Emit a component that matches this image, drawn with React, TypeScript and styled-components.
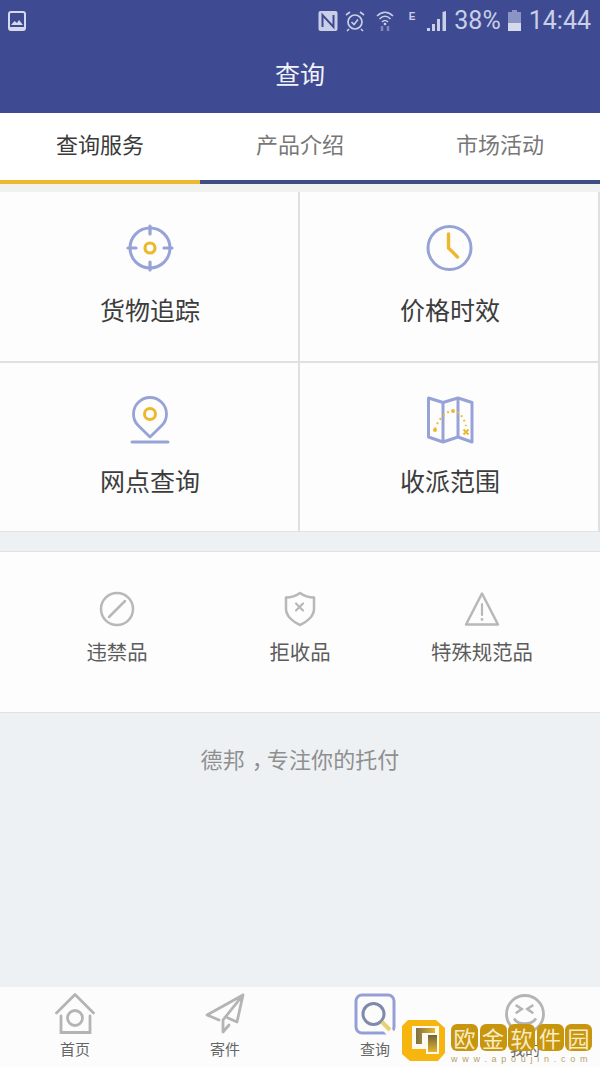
import React from "react";
import styled, { createGlobalStyle } from "styled-components";

const FONT = `"Noto Sans CJK SC", "Noto Sans", sans-serif`;
const BLUE = "#97a3d6";
const GOLD = "#ecb92e";
const GREY = "#b8b8b8";
const NAVGREY = "#b4b4b4";

const Global = createGlobalStyle`
  html, body { margin: 0; padding: 0; background: #eef1f4; }
  * { box-sizing: border-box; }
  #root { width: 600px; height: 1067px; overflow: hidden; }
`;

const Page = styled.div`
  position: relative;
  width: 600px;
  height: 1067px;
  display: flex;
  flex-direction: column;
  background: #eef1f4;
  font-family: ${FONT};
  overflow: hidden;
`;
const Header = styled.header`
  height: 113px;
  flex: none;
  background: #3e4b92;
  display: flex;
  flex-direction: column;
`;
const StatusBar = styled.div`
  height: 41px;
  padding: 0 9px 0 8px;
  display: flex;
  align-items: center;
  color: #c9cfe6;
`;
const StatusRight = styled.div`
  margin-left: auto;
  display: flex;
  align-items: center;
  height: 100%;
`;
const StatusText = styled.span<{ $ml: number }>`
  font-family: "Roboto", sans-serif;
  font-size: 25px;
  line-height: 1;
  margin-left: ${(p) => p.$ml}px;
  color: #c9cfe6;
`;
const Title = styled.h1`
  margin: 0;
  flex: 1;
  padding-bottom: 8px;
  display: flex;
  align-items: center;
  justify-content: center;
  color: #f1f2f8;
  font-size: 25px;
  font-weight: 400;
`;
const Tabs = styled.nav`
  height: 71px;
  flex: none;
  display: grid;
  grid-template-columns: repeat(3, 1fr);
  background: #fff;
`;
const Tab = styled.div<{ $active?: boolean }>`
  display: flex;
  align-items: center;
  justify-content: center;
  padding-bottom: 8px;
  font-size: 22px;
  color: ${(p) => (p.$active ? "#3a3a3a" : "#777")};
  border-bottom: 4px solid ${(p) => (p.$active ? GOLD : "#3e4e82")};
`;
const ServiceGrid = styled.section`
  height: 348px;
  flex: none;
  display: grid;
  grid-template-columns: 300px 300px;
  grid-template-rows: 171px 168px;
  background: #fdfdfd;
  border-top: 8px solid #f1f1f0;
  border-bottom: 1px solid #dfe2e4;
`;
const ServiceCell = styled.div<{ $top?: boolean }>`
  display: flex;
  flex-direction: column;
  align-items: center;
  padding: ${(p) => (p.$top ? 32 : 33)}px 0 0 2px;
  border-right: 2px solid #dfe0e1;
  border-bottom: ${(p) => (p.$top ? "2px solid #dfe0e1" : "none")};
`;
const ServiceLabel = styled.div<{ $top?: boolean }>`
  margin-top: ${(p) => (p.$top ? 19 : 18)}px;
  font-size: 25px;
  line-height: 36px;
  color: #3c3c3c;
`;
const RuleRow = styled.section`
  margin-top: 19px;
  height: 162px;
  flex: none;
  background: #fdfdfd;
  border-top: 1px solid #dfe1e3;
  border-bottom: 1px solid #dfe1e3;
  display: grid;
  grid-template-columns: 234px 132px 232px;
`;
const RuleCell = styled.div`
  display: flex;
  flex-direction: column;
  align-items: center;
  padding-top: 39px;
`;
const RuleLabel = styled.div`
  margin-top: 10px;
  font-size: 20.4px;
  line-height: 28px;
  color: #5c5c5c;
  white-space: nowrap;
`;
const Slogan = styled.div`
  flex: 1;
  padding-top: 29px;
  text-align: center;
  font-size: 22px;
  line-height: 32px;
  color: #8f8f8f;
  letter-spacing: 0.1px;
`;
const SloganComma = styled.span`
  display: inline-block;
  transform: translateX(7px);
`;
const BottomNav = styled.nav`
  height: 80px;
  flex: none;
  background: #fcfcfc;
  display: grid;
  grid-template-columns: 150px 150px 150px 150px;
`;
const NavItem = styled.div`
  display: flex;
  flex-direction: column;
  align-items: center;
  padding-top: 6px;
`;
const NavLabel = styled.div`
  font-size: 15px;
  line-height: 20px;
  margin-top: 4px;
  color: #666;
`;
const Watermark = styled.div`
  position: absolute;
  left: 402px;
  top: 1020px;
  width: 198px;
  height: 47px;
  display: flex;
  gap: 5px;
`;
const WmColumn = styled.div`
  display: flex;
  flex-direction: column;
  gap: 3px;
  padding-top: 4px;
`;
const WmChars = styled.div`
  display: flex;
  gap: 1.5px;
`;
const WmChar = styled.span`
  width: 27px;
  height: 27px;
  border-radius: 6px;
  background: #c8950f;
  color: #f8ecc4;
  font-size: 22px;
  line-height: 26px;
  text-align: center;
`;
const WmUrl = styled.div`
  font-family: "Liberation Sans", sans-serif;
  font-size: 9px;
  line-height: 10px;
  letter-spacing: 4.75px;
  color: #b8a26a;
  white-space: nowrap;
`;

const Ic = styled.svg`
  display: block;
  flex: none;
`;

const Target = () => (
  <Ic width="48" height="48" viewBox="0 0 48 48" fill="none">
    <circle cx="24" cy="24" r="20" stroke={BLUE} strokeWidth="3" />
    <path d="M24 2v8M24 38v8M2 24h8M38 24h8" stroke={BLUE} strokeWidth="3.2" strokeLinecap="round" />
    <circle cx="24" cy="24" r="5" stroke={GOLD} strokeWidth="3.2" />
  </Ic>
);
const Clock = () => (
  <Ic width="48" height="48" viewBox="0 0 48 48" fill="none">
    <circle cx="23.500" cy="24" r="21.500" stroke={BLUE} strokeWidth="3" />
    <path d="M22.500 10v14l9 9" stroke={GOLD} strokeWidth="3.400" strokeLinecap="round" strokeLinejoin="round" />
  </Ic>
);
const Pin = () => (
  <Ic width="40" height="48" viewBox="0 0 40 48" fill="none">
    <path d="M20 41 L8 29.300 A16.500 16.500 0 1 1 32 29.300 Z" stroke={BLUE} strokeWidth="2.800" strokeLinejoin="round" />
    <circle cx="20" cy="18" r="5.500" stroke={GOLD} strokeWidth="3" />
    <path d="M2 46h36" stroke={BLUE} strokeWidth="3" strokeLinecap="round" />
  </Ic>
);
const MapIcon = () => (
  <Ic width="48" height="48" viewBox="0 0 48 48" fill="none">
    <path d="M2.500 2 L17 6.500 L32 2 L46 6.500 V46 L32 41 L17 46 L2.500 41 Z" stroke={BLUE} strokeWidth="3" strokeLinejoin="round" />
    <path d="M17 6.500V46M32 2V41" stroke={BLUE} strokeWidth="3" />
    <path d="M9 33 C13 22 21 14 28 15 C34 16 38 22 40 30" stroke={GOLD} strokeWidth="2" strokeDasharray="1.800 3.400" />
    <circle cx="9" cy="34" r="2" fill={GOLD} />
    <circle cx="27" cy="15" r="2" fill={GOLD} />
    <path d="M37.500 33.500l5 5M42.500 33.500l-5 5" stroke={GOLD} strokeWidth="2" />
  </Ic>
);
const Ban = () => (
  <Ic width="36" height="36" viewBox="0 0 36 36" fill="none">
    <circle cx="18" cy="18" r="16" stroke={GREY} strokeWidth="2.500" />
    <path d="M10 26 L26 10" stroke={GREY} strokeWidth="2.500" strokeLinecap="round" />
  </Ic>
);
const Shield = () => (
  <Ic width="36" height="36" viewBox="0 0 36 36" fill="none">
    <path d="M18 2 C22 5 27 6.500 32 6.500 V18 C32 25 25 31 18 34 C11 31 4 25 4 18 V6.500 C9 6.500 14 5 18 2 Z" stroke={GREY} strokeWidth="2.500" strokeLinejoin="round" />
    <path d="M14 12.500l7 7M21 12.500l-7 7" stroke={GREY} strokeWidth="2.200" strokeLinecap="round" />
  </Ic>
);
const Warn = () => (
  <Ic width="36" height="36" viewBox="0 0 36 36" fill="none">
    <path d="M18 2.500 L34 33.500 H2 Z" stroke={GREY} strokeWidth="2.500" strokeLinejoin="round" />
    <path d="M18 13v11" stroke={GREY} strokeWidth="2.200" strokeLinecap="round" />
    <circle cx="18" cy="28.500" r="1.400" fill={GREY} />
  </Ic>
);
const Home = () => (
  <Ic width="40" height="42" viewBox="0 0 40 42" fill="none">
    <path d="M1.500 20 L20 1.500 L38.500 20" stroke={NAVGREY} strokeWidth="2.800" strokeLinejoin="round" strokeLinecap="round" />
    <path d="M6 23 V39.500 H35 V23" stroke={NAVGREY} strokeWidth="2.800" strokeLinecap="round" />
    <circle cx="20" cy="25" r="7.500" stroke={NAVGREY} strokeWidth="2.800" />
  </Ic>
);
const Send = () => (
  <Ic width="42" height="42" viewBox="0 0 42 42" fill="none">
    <path d="M39 2 L3 22 L15 27 M39 2 L33 29 L24 25 M39 2 L19 27 V39 L25 32" stroke={NAVGREY} strokeWidth="2.800" strokeLinejoin="round" strokeLinecap="round" />
  </Ic>
);
const SearchTab = () => (
  <Ic width="42" height="42" viewBox="0 0 42 42" fill="none">
    <rect x="2" y="2" width="38" height="38" rx="6" stroke="#959fd5" strokeWidth="3" />
    <path d="M27 29 L38 42" stroke="#fcfcfc" strokeWidth="8" />
    <circle cx="19.500" cy="21" r="10.500" fill="#fcfcfc" stroke="#7f8aa8" strokeWidth="3" />
    <path d="M28 29 L36 37" stroke="#e9d16f" strokeWidth="4" />
  </Ic>
);
const Face = () => (
  <Ic width="40" height="42" viewBox="0 0 40 42" fill="none">
    <circle cx="20" cy="21" r="18.500" stroke={NAVGREY} strokeWidth="2.800" />
    <path d="M10.700 12l6 4-6 4.300M28.300 12l-6 4 6 4.300" stroke={NAVGREY} strokeWidth="2.600" />
    <path d="M9 25.500c4 7 17 7 22 0" stroke={NAVGREY} strokeWidth="2.800" />
  </Ic>
);
const WmLogo = () => (
  <Ic width="44" height="41" viewBox="0 0 44 41">
    <defs>
      <linearGradient id="wmA" x1="0" y1="0" x2="1" y2="0">
        <stop offset="0" stopColor="#7d7048" />
        <stop offset="1" stopColor="#e8b52a" />
      </linearGradient>
      <linearGradient id="wmB" x1="0" y1="0" x2="0" y2="1">
        <stop offset="0" stopColor="#6f623c" />
        <stop offset="1" stopColor="#e8b52a" />
      </linearGradient>
    </defs>
    <path d="M6 0 H34 L43 8 V33 L36 41 H8 L0 34 V6 Z" fill="#f6b60f" />
    <path d="M10 6 H37 V34 H10 Z" fill="#fdfaf0" />
    <path d="M14 8 H33 V13 H20 V24 H14 Z" fill="url(#wmA)" />
    <path d="M26 15 H35 V32 H26 Z" fill="url(#wmB)" />
    <path d="M10 29 H24 V34 H10 Z" fill="#f6b60f" />
  </Ic>
);
const StImage = () => (
  <Ic width="18" height="20" viewBox="0 0 18 20" fill="none">
    <rect x="1" y="1" width="16" height="18" rx="2" stroke="#d5d9ec" strokeWidth="2" />
    <path d="M3 14l3.500-4 2.500 2 2-3 4 5z" fill="#d5d9ec" />
    <path d="M2 16h14v2H2z" fill="#d5d9ec" />
  </Ic>
);
const StNfc = () => (
  <Ic width="20" height="20" viewBox="0 0 19 20" style={{ marginRight: 7 }}>
    <rect x="0" y="0" width="19" height="20" rx="2" fill="#c9cfe6" />
    <path d="M4 16V4l11 12V4" fill="none" stroke="#3e4b92" strokeWidth="2" />
  </Ic>
);
const StAlarm = () => (
  <Ic width="20" height="22" viewBox="0 0 20 22" fill="none">
    <circle cx="10" cy="12" r="7" stroke="#c9cfe6" strokeWidth="1.700" />
    <path d="M6.500 12l2.500 2.500 4-5M1 5l4-3M19 5l-4-3M4 19l-2 2M16 19l2 2" stroke="#c9cfe6" strokeWidth="1.600" />
  </Ic>
);
const StWifi = () => (
  <Ic width="18" height="22" viewBox="0 0 18 22" fill="none" style={{ marginLeft: 11 }}>
    <path d="M1 6c5-5 11-5 16 0M3.500 9c3.500-3.500 7.500-3.500 11 0M6 12c2-2 4-2 6 0" stroke="#c9cfe6" strokeWidth="1.600" />
    <circle cx="9" cy="14" r="1.300" fill="#c9cfe6" />
    <path d="M6 16v5M12 16v5" stroke="#7d88b8" strokeWidth="2.500" />
  </Ic>
);
const StE = styled.span`
  font-family: "Liberation Sans", sans-serif;
  font-size: 10px;
  font-weight: 700;
  color: #c9cfe6;
  align-self: flex-start;
  margin: 11px 0 0 15px;
`;
const StSignal = () => (
  <Ic width="20" height="20" viewBox="0 0 20 20" style={{ marginLeft: 12 }}>
    <path d="M0 17h3v3H0zM5 13h3v7H5zM10 8h3v12h-3zM15.500 1L19 0v20h-3.500z" fill="#c9cfe6" />
  </Ic>
);
const StBattery = () => (
  <Ic width="13" height="21" viewBox="0 0 13 21" style={{ marginLeft: 7 }}>
    <path d="M4 0h5v2h4v19H0V2h4z" fill="#8b95c3" />
    <path d="M0 13h13v8H0z" fill="#d5d9ec" />
  </Ic>
);

const services = [
  { label: "货物追踪", icon: <Target /> },
  { label: "价格时效", icon: <Clock /> },
  { label: "网点查询", icon: <Pin /> },
  { label: "收派范围", icon: <MapIcon /> },
];
const rules = [
  { label: "违禁品", icon: <Ban /> },
  { label: "拒收品", icon: <Shield /> },
  { label: "特殊规范品", icon: <Warn /> },
];
const navs = [
  { label: "首页", icon: <Home /> },
  { label: "寄件", icon: <Send /> },
  { label: "查询", icon: <SearchTab /> },
  { label: "我的", icon: <Face /> },
];

export default function App() {
  return (
    <Page>
      <Global />
      <Header>
        <StatusBar>
          <StImage />
          <StatusRight>
            <StNfc />
            <StAlarm />
            <StWifi />
            <StE>E</StE>
            <StSignal />
            <StatusText $ml={7}>38%</StatusText>
            <StBattery />
            <StatusText $ml={8}>14:44</StatusText>
          </StatusRight>
        </StatusBar>
        <Title>查询</Title>
      </Header>
      <Tabs>
        <Tab $active>查询服务</Tab>
        <Tab>产品介绍</Tab>
        <Tab>市场活动</Tab>
      </Tabs>
      <ServiceGrid>
        {services.map((s, i) => (
          <ServiceCell key={s.label} $top={i < 2}>
            {s.icon}
            <ServiceLabel $top={i < 2}>{s.label}</ServiceLabel>
          </ServiceCell>
        ))}
      </ServiceGrid>
      <RuleRow>
        {rules.map((r) => (
          <RuleCell key={r.label}>
            {r.icon}
            <RuleLabel>{r.label}</RuleLabel>
          </RuleCell>
        ))}
      </RuleRow>
      <Slogan>
        德邦<SloganComma>，</SloganComma>专注你的托付
      </Slogan>
      <BottomNav>
        {navs.map((n) => (
          <NavItem key={n.label}>
            {n.icon}
            <NavLabel>{n.label}</NavLabel>
          </NavItem>
        ))}
      </BottomNav>
      <Watermark>
        <WmLogo />
        <WmColumn>
          <WmChars>
            {"欧金软件园".split("").map((c) => (
              <WmChar key={c}>{c}</WmChar>
            ))}
          </WmChars>
          <WmUrl>www.apoujin.com</WmUrl>
        </WmColumn>
      </Watermark>
    </Page>
  );
}
